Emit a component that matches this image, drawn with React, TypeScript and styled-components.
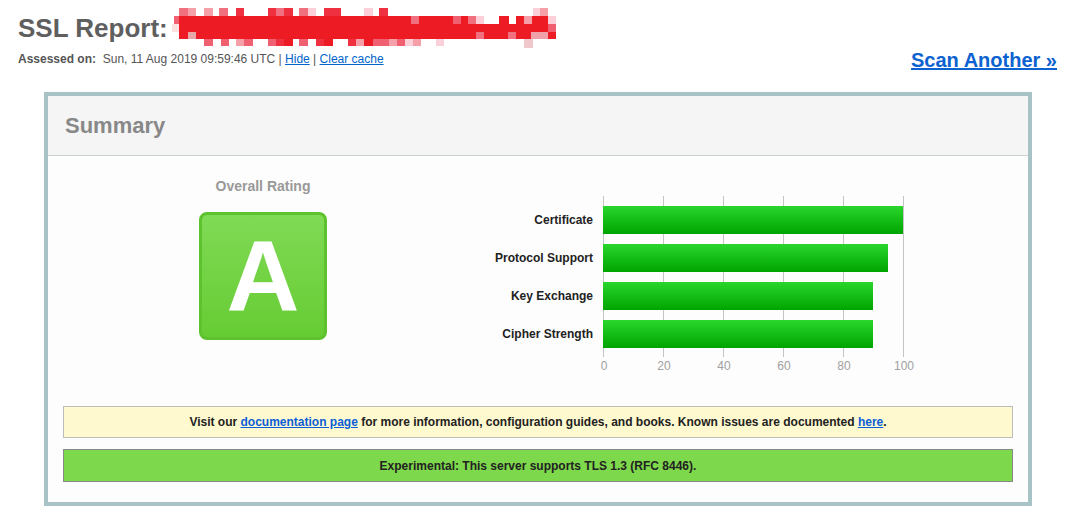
import React from "react";
import styled, { createGlobalStyle } from "styled-components";

const GlobalStyle = createGlobalStyle`
  html, body { margin: 0; padding: 0; background: #ffffff; }
  body { font-family: "Liberation Sans", Arial, sans-serif; }
`;

const Page = styled.div`
  padding: 0 26px 0 18px;
  width: 1039px;
`;

const Header = styled.header`
  display: flex;
  justify-content: space-between;
  align-items: flex-start;
`;

const HeaderLeft = styled.div`
  display: flex;
  flex-direction: column;
`;

const Title = styled.h1`
  margin: 13px 0 0;
  display: flex;
  align-items: center;
  height: 30px;
  font-size: 26px;
  line-height: 30px;
  font-weight: bold;
  color: #5f5f5f;
`;

const Redaction = styled.svg`
  display: block;
  margin-left: 3px;
  margin-top: -6px;
  flex: none;
`;

const Assessed = styled.div`
  margin-top: 9px;
  font-size: 12px;
  line-height: 14px;
  color: #555;
  white-space: pre;
`;

const Bold = styled.b`
  font-weight: bold;
`;

const SmallLink = styled.a`
  color: #0066cc;
  text-decoration: underline;
`;

const ScanLink = styled.a`
  margin-top: 48px;
  font-size: 20px;
  line-height: 24px;
  font-weight: bold;
  color: #0b62d0;
  text-decoration: underline;
`;

const Box = styled.section`
  margin: 20px 0 0 26px;
  width: 980px;
  border: 4px solid #a8c3c5;
  background: #fdfdfd;
`;

const BoxHeader = styled.div`
  height: 59px;
  display: flex;
  align-items: center;
  padding-left: 17px;
  background: #f5f5f5;
  border-bottom: 1px solid #c9d1d5;
`;

const BoxTitle = styled.h2`
  margin: 0;
  font-size: 22px;
  font-weight: bold;
  color: #888;
`;

const BoxBody = styled.div`
  padding: 0 15px 20px;
`;

const SummaryRow = styled.div`
  display: flex;
  align-items: flex-start;
`;

const RatingColumn = styled.div`
  width: 400px;
  display: flex;
  flex-direction: column;
  align-items: center;
  padding-top: 22px;
`;

const RatingLabel = styled.div`
  font-size: 14px;
  line-height: 16px;
  font-weight: bold;
  color: #999;
`;

const Grade = styled.div`
  margin-top: 18px;
  width: 122px;
  height: 122px;
  border: 3px solid #5ec22f;
  border-radius: 8px;
  background: linear-gradient(to bottom, #80da55, #66cc33);
  display: flex;
  align-items: center;
  justify-content: center;
  color: #ffffff;
  font-size: 101px;
  font-weight: bold;
  line-height: 1;
`;

const Chart = styled.div`
  margin-top: 40px;
  display: flex;
  align-items: flex-start;
`;

const LabelColumn = styled.div`
  width: 130px;
  margin-right: 10px;
  padding-top: 10px;
  display: flex;
  flex-direction: column;
  gap: 10px;
`;

const BarLabel = styled.div`
  height: 28px;
  line-height: 28px;
  text-align: right;
  font-size: 12px;
  font-weight: bold;
  color: #222;
`;

const PlotColumn = styled.div`
  display: flex;
  flex-direction: column;
`;

const Plot = styled.div`
  width: 301px;
  height: 161px;
  box-sizing: border-box;
  padding-top: 10px;
  display: flex;
  flex-direction: column;
  gap: 10px;
  background: repeating-linear-gradient(
    to right,
    #c4c4c4 0,
    #c4c4c4 1px,
    transparent 1px,
    transparent 60px
  );
`;

const Bar = styled.div<{ $value: number }>`
  height: 28px;
  width: ${(p) => p.$value * 3}px;
  background: linear-gradient(to bottom, #29d62c, #00a400);
`;

const Axis = styled.div`
  display: flex;
  margin: 2px 0 0 -29px;
`;

const Tick = styled.div`
  width: 60px;
  text-align: center;
  font-size: 12px;
  line-height: 14px;
  color: #a0a0a0;
`;

const Notice = styled.div<{ $tone: "info" | "good" }>`
  text-align: center;
  font-size: 12px;
  line-height: 14px;
  font-weight: bold;
  color: #222;
  background: ${(p) => (p.$tone === "info" ? "#fff9cf" : "#7ed84b")};
  border: 1px solid ${(p) => (p.$tone === "info" ? "#bcbcbc" : "#888888")};
  padding: ${(p) => (p.$tone === "info" ? "8px 0" : "9px 0 8px")};
  margin-top: ${(p) => (p.$tone === "info" ? "33px" : "11px")};
`;

const NoticeLink = styled.a`
  color: #0b5ed7;
  text-decoration: underline;
`;

const bars = [
  { label: "Certificate", value: 100 },
  { label: "Protocol Support", value: 95 },
  { label: "Key Exchange", value: 90 },
  { label: "Cipher Strength", value: 90 },
];

const ticks = [0, 20, 40, 60, 80, 100];

// redaction blocks: [x, y, w, h, color]
const R = "#ed1c24";
const blocks: [number, number, number, number, string][] = [
  [3, 15, 6, 8, "#f06070"],
  [1, 23, 8, 8, "#fde0e0"],
  [8, 15, 377, 23, R],
  [17, 31, 8, 7, "#e8a8a8"],
  [8, 7, 9, 8, "#f07080"],
  [17, 7, 8, 8, "#f5a0a8"],
  [33, 7, 9, 8, "#f5a0a8"],
  [48, 7, 9, 8, "#f07080"],
  [65, 7, 8, 8, "#ee3040"],
  [97, 7, 8, 8, "#ee3040"],
  [105, 7, 8, 8, "#f07080"],
  [113, 7, 9, 8, "#ee3040"],
  [128, 7, 9, 8, "#f07080"],
  [137, 7, 8, 8, "#fcd0d8"],
  [153, 7, 17, 8, "#ee3040"],
  [193, 7, 9, 8, "#fcd0d8"],
  [208, 7, 9, 8, "#ee3040"],
  [362, 7, 7, 8, "#fcd0d8"],
  [369, 7, 8, 8, "#f5a0a8"],
  [33, 38, 9, 7, "#f06070"],
  [50, 38, 8, 7, "#f06070"],
  [65, 38, 8, 7, "#f5a0a8"],
  [73, 38, 9, 7, "#f06070"],
  [97, 38, 8, 7, "#f06070"],
  [105, 38, 8, 7, "#ee3040"],
  [113, 38, 9, 7, R],
  [128, 38, 9, 7, "#f06070"],
  [145, 38, 8, 7, "#ee3040"],
  [153, 38, 9, 7, R],
  [177, 38, 8, 7, "#ee3040"],
  [185, 38, 8, 7, "#f5a0a8"],
  [193, 38, 9, 7, R],
  [202, 38, 16, 7, "#f06070"],
  [218, 38, 8, 7, "#f5a0a8"],
  [226, 38, 8, 7, "#f06070"],
  [234, 38, 8, 7, "#fcd0d8"],
  [242, 38, 8, 7, "#f5a0a8"],
  [265, 38, 8, 7, "#fcd0d8"],
  [353, 38, 9, 9, "#f0c8cc"],
  [240, 15, 8, 8, "#f07080"],
  [282, 15, 8, 8, "#f06070"],
  [297, 15, 8, 8, "#f07080"],
  [305, 15, 8, 8, "#fcd0d8"],
  [313, 15, 15, 8, "#ffffff"],
  [338, 15, 7, 8, "#ffffff"],
  [353, 15, 8, 8, "#f5a0a8"],
  [377, 15, 8, 8, "#fcd0d8"],
  [377, 23, 8, 8, "#f06070"],
  [305, 31, 8, 7, "#f07080"],
  [337, 31, 8, 7, "#f07080"],
  [360, 31, 17, 7, "#f0a0a8"],
];

export default function App() {
  return (
    <>
      <GlobalStyle />
      <Page>
        <Header>
          <HeaderLeft>
            <Title>
              SSL Report:
              <Redaction width="386" height="48" viewBox="0 0 386 48" aria-hidden="true">
                {blocks.map(([x, y, w, h, c], i) => (
                  <rect key={i} x={x} y={y} width={w} height={h} fill={c} />
                ))}
              </Redaction>
            </Title>
            <Assessed>
              <Bold>Assessed on:</Bold>
              {"  Sun, 11 Aug 2019 09:59:46 UTC | "}
              <SmallLink href="#">Hide</SmallLink>
              {" | "}
              <SmallLink href="#">Clear cache</SmallLink>
            </Assessed>
          </HeaderLeft>
          <ScanLink href="#">Scan Another »</ScanLink>
        </Header>

        <Box>
          <BoxHeader>
            <BoxTitle>Summary</BoxTitle>
          </BoxHeader>
          <BoxBody>
            <SummaryRow>
              <RatingColumn>
                <RatingLabel>Overall Rating</RatingLabel>
                <Grade>A</Grade>
              </RatingColumn>
              <Chart>
                <LabelColumn>
                  {bars.map((b) => (
                    <BarLabel key={b.label}>{b.label}</BarLabel>
                  ))}
                </LabelColumn>
                <PlotColumn>
                  <Plot>
                    {bars.map((b) => (
                      <Bar key={b.label} $value={b.value} />
                    ))}
                  </Plot>
                  <Axis>
                    {ticks.map((t) => (
                      <Tick key={t}>{t}</Tick>
                    ))}
                  </Axis>
                </PlotColumn>
              </Chart>
            </SummaryRow>

            <Notice $tone="info">
              Visit our <NoticeLink href="#">documentation page</NoticeLink> for more information,
              configuration guides, and books. Known issues are documented{" "}
              <NoticeLink href="#">here</NoticeLink>.
            </Notice>
            <Notice $tone="good">Experimental: This server supports TLS 1.3 (RFC 8446).</Notice>
          </BoxBody>
        </Box>
      </Page>
    </>
  );
}
